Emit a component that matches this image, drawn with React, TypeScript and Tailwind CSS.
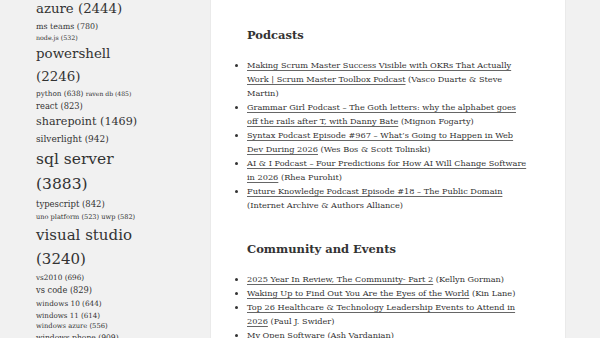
// each row of the tag cloud, as it wraps in the sidebar
const tagRows: [string, number][][] = [
  [['azure (2444)', 13.3]],
  [['ms teams (780)', 7.95]],
  [['node.js (532)', 6.3]],
  [['powershell', 13.4]],
  [['(2246)', 13.4]],
  [
    ['python (638)', 7.3],
    ['raven db (485)', 6.1],
  ],
  [['react (823)', 8.3]],
  [['sharepoint (1469)', 11.15]],
  [['silverlight (942)', 8.96]],
  [['sql server', 15.5]],
  [['(3883)', 15.5]],
  [['typescript (842)', 8.47]],
  [
    ['uno platform (523)', 6.6],
    ['uwp (582)', 6.6],
  ],
  [['visual studio', 15]],
  [['(3240)', 15]],
  [['vs2010 (696)', 7.27]],
  [['vs code (829)', 8.26]],
  [['windows 10 (644)', 7.28]],
  [['windows 11 (614)', 7.1]],
  [['windows azure (556)', 6.77]],
  [['windows phone (909)', 7.6]],
]

const sections = [
  {
    title: 'Podcasts',
    items: [
      {
        link: 'Making Scrum Master Success Visible with OKRs That Actually Work | Scrum Master Toolbox Podcast',
        by: 'Vasco Duarte & Steve Martin',
      },
      {
        link: 'Grammar Girl Podcast – The Goth letters: why the alphabet goes off the rails after T, with Danny Bate',
        by: 'Mignon Fogarty',
      },
      {
        link: 'Syntax Podcast Episode #967 – What’s Going to Happen in Web Dev During 2026',
        by: 'Wes Bos & Scott Tolinski',
      },
      {
        link: 'AI & I Podcast – Four Predictions for How AI Will Change Software in 2026',
        by: 'Rhea Purohit',
      },
      {
        link: 'Future Knowledge Podcast Episode #18 – The Public Domain',
        by: 'Internet Archive & Authors Alliance',
      },
    ],
  },
  {
    title: 'Community and Events',
    items: [
      { link: '2025 Year In Review, The Community- Part 2', by: 'Kellyn Gorman' },
      { link: 'Waking Up to Find Out You Are the Eyes of the World', by: 'Kin Lane' },
      {
        link: 'Top 26 Healthcare & Technology Leadership Events to Attend in 2026',
        by: 'Paul J. Swider',
      },
      { link: 'My Open Software', by: 'Ash Vardanian' },
    ],
  },
]

export default function App() {
  return (
    <div className="flex h-[338px] w-[600px] overflow-hidden bg-[#f1f1f1] font-['DejaVu_Serif',serif] text-[#333]">
      <aside className="w-[211px] shrink-0 pl-[36px]">
        <div className="-mt-[2px] flex flex-col">
          {tagRows.map((row, i) => (
            <div key={i} className="whitespace-nowrap text-[0px] leading-[1.65]">
              {row.map(([label, size]) => (
                <a key={label} className="text-[#333]" style={{ fontSize: size }}>
                  {label}{' '}
                </a>
              ))}
            </div>
          ))}
        </div>
      </aside>

      <main className="w-[354px] shrink-0 bg-white px-[36px] pt-[27px] shadow-[0_0_1px_rgba(0,0,0,0.18)]">
        {sections.map((section, i) => (
          <section key={section.title} className={i > 0 ? 'mt-[29px]' : ''}>
            <h2 className="mb-[15px] text-[11.5px] font-bold leading-[16px] text-[#333]">
              {section.title}
            </h2>
            <ul className="list-disc text-[8.2px] leading-[14px]">
              {section.items.map((item) => (
                <li key={item.link}>
                  <a className="underline decoration-[#666] decoration-1 underline-offset-[2px]">
                    {item.link}
                  </a>{' '}
                  ({item.by})
                </li>
              ))}
            </ul>
          </section>
        ))}
      </main>
    </div>
  )
}
